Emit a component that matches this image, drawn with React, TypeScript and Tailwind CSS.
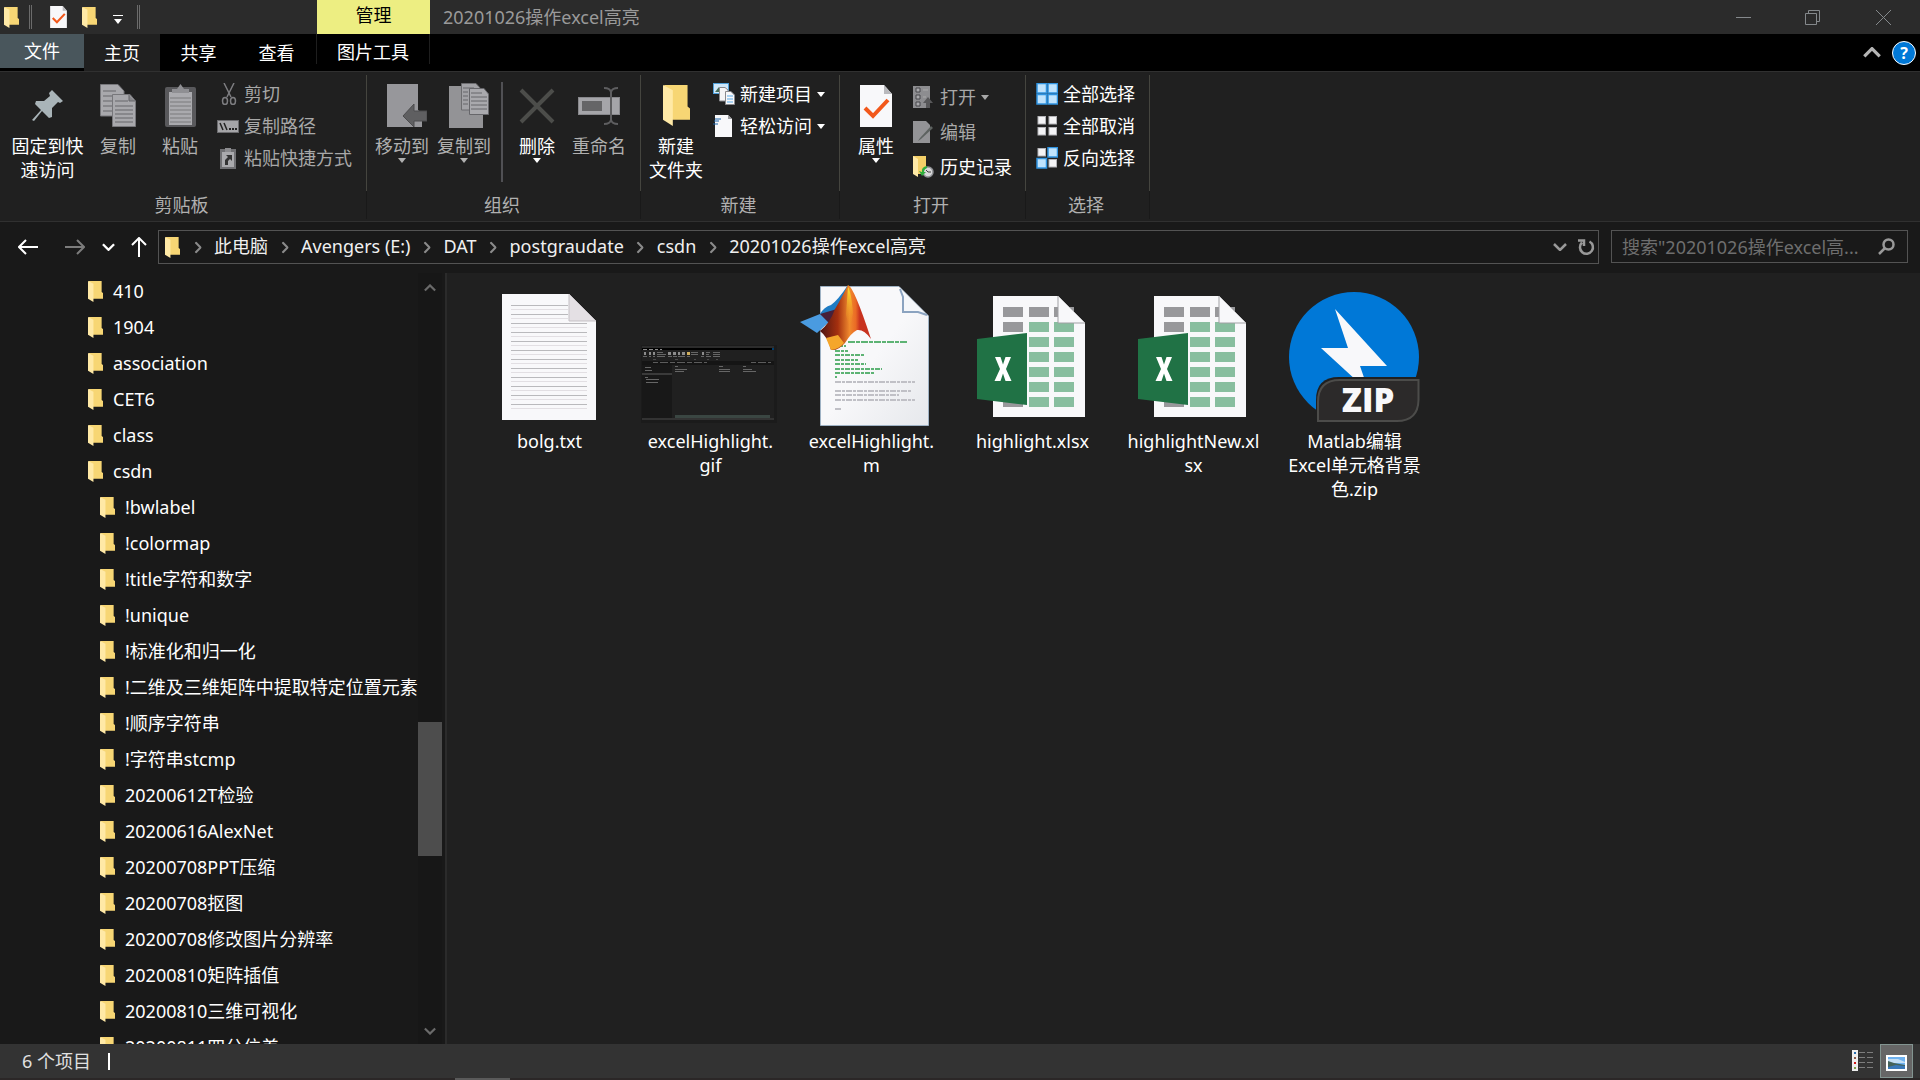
import React from 'react';

type IconProps = { className?: string };

const FolderIcon: React.FC<IconProps> = ({ className = 'w-[15px] h-[21px]' }) => (
  <svg className={`${className} shrink-0`} viewBox="0 0 22 40" preserveAspectRatio="none" aria-hidden="true">
    <path d="M1 0H20V21L22 23V34H1Z" fill="#f7d674" />
    <path d="M0 0L8 5V40L0 34Z" fill="#ffe9a6" />
  </svg>
);

const CheckPage: React.FC<IconProps> = ({ className }) => (
  <svg className={className} viewBox="0 0 32 42" aria-hidden="true">
    <path d="M0 0H24L32 9V42H0Z" fill="#f8f8fa" />
    <path d="M24 0V9H32Z" fill="#b9b9bd" />
    <path d="M5 23L13 31L28 15" fill="none" stroke="#f2581b" strokeWidth="4" />
  </svg>
);

const PinIcon = () => (
  <svg className="w-[31px] h-[31px]" viewBox="0 0 31 31" aria-hidden="true">
    <path d="M20 0L31 11L28 13L26 12L20 18V27L17 28L10 21L2 31L0 30L9 20L3 14L4 11H12L18 6L17 3Z" fill="#a9b4b8" />
  </svg>
);

const CopyIcon = () => (
  <svg className="w-[36px] h-[43px]" viewBox="0 0 36 43" aria-hidden="true">
    <g fill="#a8a8ac" stroke="#77777b">
      <path d="M.5 .5H18L24 7V32H.5Z" />
      <path d="M12.500 10.500H30L35.500 17V42.500H12.500Z" />
    </g>
    <path d="M3 7H16M3 12H12M3 17H12M3 22H12M3 27H12M15 17H28M15 22H33M15 26H33M15 30H33M15 34H33M15 38H33" stroke="#66666a" />
    <path d="M29 11V17H35" fill="#88888c" stroke="#66666a" />
  </svg>
);

const PasteIcon = () => (
  <svg className="w-[31px] h-[43px]" viewBox="0 0 31 43" aria-hidden="true">
    <rect y="3" width="31" height="40" rx="2" fill="#59595c" />
    <rect x="4" y="8" width="23" height="33" fill="#aaaaae" />
    <path d="M7 9V5H12L15.500 0L19 5H24V9Z" fill="#8f8f93" />
    <path d="M5 14H26M5 18H26M5 22H26M5 26H26M5 30H26M5 34H26M5 38H26" stroke="#7a7a7d" />
  </svg>
);

const ScissorsIcon = () => (
  <svg className="w-[20px] h-[22px]" viewBox="-4 0 20 22" fill="none" stroke="#7d7d80" aria-hidden="true">
    <path d="M3 0L10 14M13 0L6 14" strokeWidth="1.500" />
    <ellipse cx="4" cy="18" rx="2.500" ry="3.500" strokeWidth="1.500" />
    <ellipse cx="12" cy="18" rx="2.500" ry="3.500" strokeWidth="1.500" />
  </svg>
);

const PathIcon = () => (
  <svg className="w-[22px] h-[13px]" viewBox="0 0 22 13" aria-hidden="true">
    <rect x=".5" y=".5" width="21" height="12" fill="#a5a5a8" stroke="#6c6c6f" />
    <path d="M3 3L6 10M7 3L10 10" stroke="#222" strokeWidth="1.500" />
    <path d="M12 9H14M15 9H17M18 9H20" stroke="#222" strokeWidth="2" />
  </svg>
);

const ShortcutIcon = () => (
  <svg className="w-[19px] h-[22px]" viewBox="-3 0 19 22" aria-hidden="true">
    <rect y="2" width="16" height="20" fill="#707073" />
    <rect x="2" y="5" width="12" height="15" fill="#aaaaad" />
    <path d="M5 1H11V5H5Z" fill="#8c8c8f" />
    <path d="M5 18V13L8 10L6 8H12V14L10 12L8 14V18Z" fill="#333" />
  </svg>
);

const MoveToIcon = () => (
  <svg className="w-[50px] h-[43px]" viewBox="-10 0 50 43" aria-hidden="true">
    <path d="M0 0H31V26L35 29V43H0Z" fill="#97979b" />
    <path d="M16 32L27 20V27H40V37H27V43Z" fill="#5f5f61" stroke="#4c4c4e" />
  </svg>
);

const CopyToIcon = () => (
  <svg className="w-[50px] h-[45px]" viewBox="-10 0 50 45" aria-hidden="true">
    <path d="M0 3H30V28L34 31V45H0Z" fill="#939396" />
    <path d="M12.500 .5H27L32 6V27H12.500Z" fill="#a2a2a6" stroke="#6d6d70" />
    <path d="M20.500 5.500H35L39.500 11V31.500H20.500Z" fill="#a9a9ad" stroke="#66666a" />
    <path d="M14 5H25M14 9H19M14 13H19M14 17H19M14 21H19M22 10H33M22 14H38M22 18H38M22 22H38M22 26H38" stroke="#66666a" />
  </svg>
);

const DeleteIcon = () => (
  <svg className="w-[36px] h-[36px]" viewBox="0 0 36 36" aria-hidden="true">
    <path d="M2 2L34 34M34 2L2 34" stroke="#4c4d4a" strokeWidth="4" />
  </svg>
);

const RenameIcon = () => (
  <svg className="w-[42px] h-[38px]" viewBox="0 0 42 38" aria-hidden="true">
    <rect x=".5" y="10.500" width="41" height="17" fill="#a5a5a9" stroke="#88888c" />
    <rect x="4" y="14" width="20" height="10" fill="#656567" />
    <path d="M26 1Q32 1 33 5Q34 1 40 1M33 4V34M26 37Q32 37 33 33Q34 37 40 37" fill="none" stroke="#5e5e60" strokeWidth="2" />
  </svg>
);

const NewItemIcon = () => (
  <svg className="w-[22px] h-[22px]" viewBox="0 0 22 22" aria-hidden="true">
    <rect x=".5" y=".5" width="15" height="10" fill="#cfe8fb" stroke="#4f9fd8" />
    <path d="M2 9L6 4L9 9Z" fill="#446d57" />
    <path d="M6.500 4.500H12L15 7V18H6.500Z" fill="#f4f4f6" stroke="#88888c" />
    <path d="M12.500 8.500H18L21.500 12V21.500H12.500Z" fill="#f8f8fa" stroke="#88888c" />
    <path d="M14 13H20M14 16H20M14 19H20" stroke="#58a9e6" />
  </svg>
);

const EasyAccessIcon = () => (
  <svg className="w-[20px] h-[22px]" viewBox="0 0 20 22" aria-hidden="true">
    <path d="M2 0H15L19 4V22H2Z" fill="#f8f8fa" />
    <path d="M15 0V4H19Z" fill="#9c9ca0" />
    <path d="M2 4H8M1 6H6M0 9H5" stroke="#1b62a8" />
  </svg>
);

const OpenIcon = () => (
  <svg className="w-[20px] h-[22px]" viewBox="0 0 20 22" aria-hidden="true">
    <rect width="17" height="22" fill="#8d8d90" />
    <path d="M3 2H7V6H3ZM3 9H7V13H3ZM3 16H7V20H3Z" fill="#a9a9ac" stroke="#47474a" />
    <path d="M10 4H15M10 11H13" stroke="#aaa" />
    <path d="M15 11L20 17H17V22H13V17H10Z" fill="#58585a" />
  </svg>
);

const EditIcon = () => (
  <svg className="w-[20px] h-[22px]" viewBox="0 0 20 22" aria-hidden="true">
    <path d="M0 0H13L17 4V22H0Z" fill="#939396" />
    <path d="M18 5L7 17L5 20L8 18L20 7Z" fill="#5d6260" />
  </svg>
);

const HistoryIcon = () => (
  <svg className="w-[21px] h-[22px]" viewBox="0 0 21 22" aria-hidden="true">
    <path d="M0 0H13V18H0Z" fill="#f3cf68" />
    <path d="M0 0L5 3V21L0 18Z" fill="#ffe9a6" />
    <circle cx="15" cy="16" r="5" fill="#d8d8da" stroke="#909296" strokeWidth="1.500" />
    <path d="M13 14L15 16H18" fill="none" stroke="#444" />
    <path d="M14 10Q8 11 9 16L6 15L9 20L13 16H11Q11 13 14 12Z" fill="#2fae3c" />
  </svg>
);

const TILE_ON = { fill: '#bfe3fd', stroke: '#2f93e0' };
const TILE_OFF = { fill: '#f4f4f6', stroke: '#b4b4b8' };

const TilesIcon: React.FC<{ tiles: boolean[] }> = ({ tiles }) => (
  <svg className="w-[22px] h-[22px]" viewBox="0 0 22 22" aria-hidden="true">
    {tiles.map((on, i) => {
      const size = on ? 10 : 8;
      return (
        <rect
          key={i}
          x={(i % 2 ? 17 : 6) - size / 2}
          y={(i > 1 ? 16.5 : 5.5) - size / 2}
          width={size - 0.5}
          height={size - 0.5}
          strokeWidth={on ? 1.5 : 1}
          {...(on ? TILE_ON : TILE_OFF)}
        />
      );
    })}
  </svg>
);

const Caret: React.FC<IconProps> = ({ className = '' }) => (
  <svg className={`w-[8px] h-[5px] shrink-0 ${className}`} viewBox="0 0 8 5" aria-hidden="true">
    <path d="M0 0H8L4 5Z" fill="currentColor" />
  </svg>
);

const Chevron: React.FC<IconProps> = ({ className = '' }) => (
  <svg className={`shrink-0 ${className}`} viewBox="0 0 14 8" fill="none" stroke="currentColor" strokeWidth="2.500" aria-hidden="true">
    <path d="M1 1L7 7L13 1" />
  </svg>
);

// ---- ribbon ----

interface BigButtonProps {
  icon: React.ReactNode;
  lines: string[];
  width: string;
  muted?: boolean;
  caret?: boolean;
}

const BigButton: React.FC<BigButtonProps> = ({ icon, lines, width, muted, caret }) => (
  <button className={`${width} shrink-0 flex flex-col items-center ${muted ? 'text-[#b0b0b0]' : 'text-white'}`}>
    <span className="h-[55px] flex items-center justify-center">{icon}</span>
    <span className="mt-px leading-6 whitespace-nowrap">
      {lines.map((line) => (
        <span key={line} className="block">{line}</span>
      ))}
    </span>
    {caret && <Caret />}
  </button>
);

interface SmallButtonProps {
  icon: React.ReactNode;
  label: string;
  muted?: boolean;
  caret?: boolean;
}

const SmallButton: React.FC<SmallButtonProps> = ({ icon, label, muted, caret }) => (
  <button className={`flex items-center h-8 whitespace-nowrap ${muted ? 'text-[#a8a8a8]' : 'text-white'}`}>
    <span className="w-[27px] flex shrink-0 justify-start">{icon}</span>
    <span>{label}</span>
    {caret && <Caret className="ml-[5px]" />}
  </button>
);

const RibbonGroup: React.FC<{ title: string; width: string; children: React.ReactNode }> = ({ title, width, children }) => (
  <section className={`${width} shrink-0 flex flex-col pt-[3px]`}>
    <div className="h-[116px] flex items-start border-r border-[#45453f] pt-[3px]">{children}</div>
    <h2 className="h-[28px] flex items-center justify-center border-r border-[#191919] pr-[3px] text-[#b0b0b0]">{title}</h2>
  </section>
);

const Ribbon = () => (
  <div className="h-[151px] shrink-0 flex bg-[#202020] border-y border-[#303030] overflow-hidden">
    <RibbonGroup title="剪贴板" width="w-[367px]">
      <BigButton icon={<PinIcon />} lines={['固定到快', '速访问']} width="w-[95px]" />
      <BigButton icon={<CopyIcon />} lines={['复制']} width="w-[46px]" muted />
      <BigButton icon={<PasteIcon />} lines={['粘贴']} width="w-[78px]" muted />
      <div className="flex flex-col -ml-[2px]">
        <SmallButton icon={<ScissorsIcon />} label="剪切" muted />
        <SmallButton icon={<PathIcon />} label="复制路径" muted />
        <SmallButton icon={<ShortcutIcon />} label="粘贴快捷方式" muted />
      </div>
    </RibbonGroup>
    <RibbonGroup title="组织" width="w-[274px]">
      <span className="w-[4px]" />
      <BigButton icon={<MoveToIcon />} lines={['移动到']} width="w-[62px]" muted caret />
      <BigButton icon={<CopyToIcon />} lines={['复制到']} width="w-[62px]" muted caret />
      <span className="mt-[4px] ml-[6px] h-[100px] w-[2px] bg-[#505054]" />
      <BigButton icon={<DeleteIcon />} lines={['删除']} width="w-[68px]" caret />
      <BigButton icon={<RenameIcon />} lines={['重命名']} width="w-[56px]" muted />
    </RibbonGroup>
    <RibbonGroup title="新建" width="w-[199px]">
      <BigButton icon={<FolderIcon className="w-[27px] h-[41px]" />} lines={['新建', '文件夹']} width="w-[70px]" />
      <div className="flex flex-col pl-[2px]">
        <SmallButton icon={<NewItemIcon />} label="新建项目" caret />
        <SmallButton icon={<EasyAccessIcon />} label="轻松访问" caret />
      </div>
    </RibbonGroup>
    <RibbonGroup title="打开" width="w-[186px]">
      <BigButton icon={<CheckPage className="w-[32px] h-[42px]" />} lines={['属性']} width="w-[72px]" caret />
      <div className="flex flex-col gap-[3px] pt-[3px] pl-px">
        <SmallButton icon={<OpenIcon />} label="打开" muted caret />
        <SmallButton icon={<EditIcon />} label="编辑" muted />
        <SmallButton icon={<HistoryIcon />} label="历史记录" />
      </div>
    </RibbonGroup>
    <RibbonGroup title="选择" width="w-[124px]">
      <div className="flex flex-col pl-[10px]">
        <SmallButton icon={<TilesIcon tiles={[true, true, true, true]} />} label="全部选择" />
        <SmallButton icon={<TilesIcon tiles={[false, false, false, false]} />} label="全部取消" />
        <SmallButton icon={<TilesIcon tiles={[false, true, true, false]} />} label="反向选择" />
      </div>
    </RibbonGroup>
  </div>
);

// ---- title bar and tabs ----

const TitleBar = () => (
  <header className="h-[34px] shrink-0 flex items-stretch bg-[#2b2b2b]">
    <div className="w-[317px] shrink-0 flex items-center pl-1">
      <FolderIcon />
      <span className="ml-[10px] h-[24px] w-[3px] border-x border-[#6b6b6b]" />
      <button aria-label="属性" className="ml-[18px]"><CheckPage className="w-[17px] h-[22px]" /></button>
      <button aria-label="新建文件夹" className="ml-[15px]"><FolderIcon /></button>
      <button aria-label="自定义快速访问工具栏" className="ml-[16px] mt-[4px] flex flex-col items-center gap-[3px] text-white">
        <span className="w-[10px] h-px bg-white" />
        <Caret />
      </button>
      <span className="ml-[14px] h-[24px] w-[3px] border-x border-[#6b6b6b]" />
    </div>
    <button className="w-[113px] shrink-0 bg-[#edee82] text-black pb-[4px]">管理</button>
    <h1 className="flex-1 self-center pl-[13px] text-[#9a9a9a]">20201026操作excel高亮</h1>
    <div className="flex items-center text-[#85898c]">
      <button aria-label="最小化" className="w-[70px] flex justify-center">
        <svg className="w-[15px] h-[15px]" viewBox="0 0 15 15" stroke="currentColor"><path d="M0 7.500H15" /></svg>
      </button>
      <button aria-label="还原" className="w-[68px] flex justify-center">
        <svg className="w-[15px] h-[15px]" viewBox="0 0 15 15" fill="none" stroke="currentColor">
          <path d="M.5 3.500H11.500V14.500H.5ZM3.500 3V.5H14.500V11.500H12" />
        </svg>
      </button>
      <button aria-label="关闭" className="w-[74px] flex justify-center">
        <svg className="w-[15px] h-[15px]" viewBox="0 0 15 15" stroke="currentColor"><path d="M0 0L15 15M15 0L0 15" /></svg>
      </button>
    </div>
  </header>
);

const TabBar = () => (
  <nav className="h-[37px] shrink-0 flex bg-black text-white">
    <button className="w-[84px] h-[34px] bg-[#49565c]">文件</button>
    <button className="w-[76px] bg-[#202020]">主页</button>
    <button className="w-[77px]">共享</button>
    <button className="w-[79px]">查看</button>
    <button className="w-[114px] h-[30px] border-x border-[#1e1e1e] pt-[5px]">图片工具</button>
    <div className="ml-auto flex items-center gap-[11px] pr-1">
      <button aria-label="最小化功能区" className="text-[#b5b5b5]"><Chevron className="w-[18px] h-[11px] rotate-180" /></button>
      <button aria-label="帮助" className="w-6 h-6 rounded-full bg-[#0078d7] border border-white flex items-center justify-center">
        <span className="text-base leading-5 font-bold">?</span>
      </button>
    </div>
  </nav>
);

// ---- address bar ----

const crumbs = ['此电脑', 'Avengers (E:)', 'DAT', 'postgraudate', 'csdn', '20201026操作excel高亮'];

const Arrow: React.FC<IconProps> = ({ className = '' }) => (
  <svg className={`w-[20px] h-[16px] ${className}`} viewBox="0 0 20 16" fill="none" stroke="currentColor" strokeWidth="2" aria-hidden="true">
    <path d="M20 8H2M8 1L1 8L8 15" />
  </svg>
);

const AddressBar = () => (
  <div className="h-[51px] shrink-0 flex items-start bg-[#191919] pt-2 pr-3">
    <div className="w-[158px] shrink-0 h-[34px] flex items-center pl-[18px] text-white">
      <button aria-label="后退"><Arrow /></button>
      <button aria-label="前进" className="ml-[27px] text-[#7c7c7c]"><Arrow className="rotate-180" /></button>
      <button aria-label="最近位置" className="ml-[17px]"><Chevron className="w-[13px] h-[8px]" /></button>
      <button aria-label="上移" className="ml-[14px]"><Arrow className="rotate-90" /></button>
    </div>
    <div className="flex-1 min-w-0 h-[34px] flex items-center border border-[#535353] pl-[6px] text-[#f0f0f0]">
      <FolderIcon />
      <ol className="flex pl-px pb-[2px]">
        {crumbs.map((crumb) => (
          <li key={crumb} className="flex items-center">
            <span className="w-[33px] shrink-0 flex justify-center text-[#8a8a8a] pt-[2px]">
              <Chevron className="w-[12px] h-[7px] -rotate-90" />
            </span>
            <a href="#" className="whitespace-nowrap">{crumb}</a>
          </li>
        ))}
      </ol>
      <button aria-label="以前的位置" className="ml-auto text-[#999]"><Chevron className="w-[14px] h-[8px]" /></button>
      <button aria-label="刷新" className="ml-[11px] mr-[3px] text-[#999]">
        <svg className="w-[17px] h-[17px]" viewBox="0 0 17 17" fill="none" stroke="currentColor" strokeWidth="2.500">
          <path d="M11.500 2.500A6.500 6.500 0 1 1 4 3.500M0 1.500H6V7" />
        </svg>
      </button>
    </div>
    <div className="ml-3 w-[297px] shrink-0 h-[33px] flex items-center border border-[#535353] pl-[10px] pr-3">
      <input
        type="text"
        aria-label="搜索"
        placeholder={'搜索"20201026操作excel高...'}
        className="flex-1 min-w-0 bg-transparent outline-none placeholder:text-[#6e6e6e]"
      />
      <svg className="w-[17px] h-[17px] shrink-0 text-[#999]" viewBox="0 0 17 17" fill="none" stroke="currentColor" strokeWidth="2.500" aria-hidden="true">
        <circle cx="10.500" cy="6.500" r="5" />
        <path d="M7 10L1 16" />
      </svg>
    </div>
  </div>
);

// ---- folder tree ----

const topFolders = ['410', '1904', 'association', 'CET6', 'class', 'csdn'];
const csdnFolders = [
  '!bwlabel',
  '!colormap',
  '!title字符和数字',
  '!unique',
  '!标准化和归一化',
  '!二维及三维矩阵中提取特定位置元素',
  '!顺序字符串',
  '!字符串stcmp',
  '20200612T检验',
  '20200616AlexNet',
  '20200708PPT压缩',
  '20200708抠图',
  '20200708修改图片分辨率',
  '20200810矩阵插值',
  '20200810三维可视化',
  '20200811四分位差',
];

const TreeRow: React.FC<{ name: string; indent: string }> = ({ name, indent }) => (
  <li className={`${indent} h-9 flex items-center gap-[10px] whitespace-nowrap`}>
    <FolderIcon />
    <span>{name}</span>
  </li>
);

const FolderTree = () => (
  <aside className="w-[447px] shrink-0 flex bg-[#191919] border-r-2 border-[#2b2b2b] text-white overflow-hidden">
    <ul className="flex-1 min-w-0 overflow-hidden">
      {topFolders.map((name) => <TreeRow key={name} name={name} indent="pl-[88px]" />)}
      {csdnFolders.map((name) => <TreeRow key={name} name={name} indent="pl-[100px]" />)}
    </ul>
    <div className="w-6 mr-[3px] shrink-0 flex flex-col items-center bg-[#171717] text-[#6a6a6a] pt-[11px] pb-[9px]">
      <Chevron className="w-[12px] h-[8px] rotate-180" />
      <div className="basis-0 grow-[430] shrink-0" />
      <div className="w-full h-[134px] bg-[#4d4d4d]" />
      <div className="basis-0 grow-[171] shrink-0" />
      <Chevron className="w-[12px] h-[8px]" />
    </div>
  </aside>
);

// ---- files ----

const TxtIcon = () => (
  <svg className="w-[94px] h-[126px]" viewBox="0 0 94 126" aria-hidden="true">
    <path d="M0 0H67L94 27V126H0Z" fill="#f8f8fa" />
    {Array.from({ length: 12 }, (_, i) => (
      <g key={i}>
        <path d={`M9 ${11.5 + i * 9}H${i < 2 ? 66 : 85}`} stroke="#b9b9bc" />
        <path d={`M9 ${15.5 + i * 9}H${i < 2 ? 66 : 85}`} stroke="#e2dfe3" />
      </g>
    ))}
    <path d="M67 0V27H94Z" fill="#e4e0e4" stroke="#c5c1c5" />
  </svg>
);

const GifThumb = () => (
  <svg className="w-[136px] h-[78px]" viewBox="0 0 136 78" aria-hidden="true">
    <rect width="136" height="78" fill="#1b1b1b" />
    <rect x="1" y="1" width="132" height="74" fill="#202020" />
    <rect x="1" y="1" width="132" height="2" fill="#2c2c2c" />
    <rect x="1" y="3" width="132" height="2" fill="#000" />
    <rect x="1" y="16" width="132" height="4" fill="#151515" />
    <rect x="1" y="20" width="30" height="53" fill="#181818" />
    <rect x="1" y="28" width="30" height="2" fill="#3a3a3a" />
    <rect x="1" y="73" width="132" height="2" fill="#333" />
    <rect x="34" y="70" width="95" height="3" fill="#3a4642" />
    <path d="M2 4.500H6M8 4.500H12M14 4.500H17M19 4.500H21" stroke="#8a8a8a" />
    <path d="M3 8.500H5M8 8.500H10M12 8.500H14M27 8.500H30M32 8.500H35M37 8.500H39M41 8.500H44M61 8.500H63" stroke="#8c8c8c" strokeWidth="3" />
    <path d="M46 8.500H49" stroke="#cfae5c" strokeWidth="3" />
    <path d="M2 11.500H6M8 11.500H10M12 11.500H14M16 7.500H22M16 9.500H25M16 11.500H24M27 11.500H31M32 11.500H36M37 11.500H44M46 11.500H49M50 7.500H57M50 9.500H57M60 11.500H63M65 7.500H69M65 9.500H68M65 11.500H70M72 7.500H79M72 9.500H79M72 11.500H79" stroke="#666" />
    <path d="M12 14.500H15M34 14.500H37M53 14.500H55M66 14.500H68M75 14.500H77" stroke="#4a4a4a" />
    <path d="M12 17.500H66M110 17.500H130" stroke="#5c5c5c" strokeDasharray="5 2 8 2" />
    <path d="M4 22.500H10M4 25.500H11M4 32.500H7M5 34.500H18M5 37.500H17M34 21.500H37M78 21.500H82M102 21.500H105M34 24.500H46M34 26.500H43M78 24.500H89M78 26.500H89M102 24.500H111M102 26.500H115" stroke="#666" />
    <path d="M131 4H133" stroke="#0078d7" />
  </svg>
);

const MatlabIcon = () => (
  <svg className="w-[131px] h-[142px]" viewBox="0 0 131 142" aria-hidden="true">
    <defs>
      <linearGradient id="membrane" x1="0" x2="1" y1="0" y2="0">
        <stop offset="0" stopColor="#4d1512" />
        <stop offset=".35" stopColor="#a5300f" />
        <stop offset=".58" stopColor="#f08a2e" />
        <stop offset=".7" stopColor="#ea6a25" />
        <stop offset=".78" stopColor="#c8321f" />
        <stop offset="1" stopColor="#c8321f" />
      </linearGradient>
      <linearGradient id="peak" x1="0" x2="0" y1="0" y2="1">
        <stop offset="0" stopColor="#f9e12f" />
        <stop offset="1" stopColor="#f08a22" stopOpacity="0" />
      </linearGradient>
      <linearGradient id="sheet" x1="0" x2="1" y1="0" y2="1">
        <stop offset=".5" stopColor="#f8f8fa" />
        <stop offset="1" stopColor="#e6e8ec" />
      </linearGradient>
    </defs>
    <path d="M20.500 1.500H99L128.500 31V140.500H20.500Z" fill="url(#sheet)" stroke="#9fb2c4" />
    <path d="M99 2L103 10V27H120L128 31Z" fill="#f5f7fa" />
    <path d="M100 4L103 12V27H118L127 30" fill="none" stroke="#8ba3c0" strokeWidth="2" />
    <path d="M48 57H108" stroke="#5db374" strokeWidth="2" strokeDasharray="7 1 4 1" />
    <path d="M38 61H46M35 66H48M35 70H65M35 75H58M35 79H66M35 84H82M35 88H74M35 92H37" stroke="#5db374" strokeWidth="2" strokeDasharray="5 1 3 1" />
    <path d="M35 97H115M35 106H112M35 110H99M35 115H115M35 124H42" stroke="#c0c0c6" strokeWidth="2" strokeDasharray="6 1 3 1" />
    <path d="M0 37L20 29L29 37L17 48Z" fill="#4a9be0" />
    <path d="M20 29Q24 22 31 20Q38 15 48 0L42 20L29 38Z" fill="#1f7cc4" />
    <path d="M20 29L37 24L29 38Z" fill="#47203a" />
    <path d="M20 46Q30 38 35 24Q41 14 48 0Q54 2 71 54Q64 44 57 45Q51 48 45 58Q38 66 31 65Q28 52 20 46Z" fill="url(#membrane)" />
    <path d="M48 2Q51 6 53 28L50 44L46 30Z" fill="url(#peak)" />
    <path d="M31 65L26 53L38 50L44 58Q38 65 31 65Z" fill="#f5a62b" />
  </svg>
);

const ExcelIcon = () => (
  <svg className="w-[108px] h-[122px]" viewBox="0 0 108 122" aria-hidden="true">
    <path d="M16 0H81L108 27V121H16Z" fill="#f8f8fa" />
    {Array.from({ length: 7 }, (_, r) =>
      [26, 52, 77].map((x, c) => (
        <rect key={`${r}-${x}`} x={x} y={11 + r * 15} width="20" height="10" fill={r === 0 || c === 0 ? '#98989b' : '#88be9f'} />
      ))
    )}
    <path d="M81 0L108 27H81Z" fill="#f8f8fa" />
    <path d="M81 0V27H108" fill="none" stroke="#a0a0a4" />
    <path d="M0 43L50 37V109L0 103Z" fill="#207245" />
    <path d="M18 61H23.500L26 68.500L28.500 61H34L29 73L34.500 85H28.500L26 77.500L23.500 85H17.500L23 73Z" fill="#fff" />
  </svg>
);

const ZipIcon = () => (
  <svg className="w-[131px] h-[131px]" viewBox="0 0 131 131" aria-hidden="true">
    <circle cx="65" cy="65" r="65" fill="#0078d7" />
    <path d="M46 17L98 74H71L80 100L32 56H59Z" fill="#f8f8fa" />
    <path d="M27 131V108Q27 85 50 85H131V131Z" fill="#202020" />
    <path d="M29 129V110Q29 88 51 88H129.500V108Q129 129 108 129Z" fill="#2c2a2a" stroke="#4c4c4a" strokeWidth="2" />
    <text x="79" y="120" textAnchor="middle" fontSize="33" fontWeight="800" fill="#f8f8fa" fontFamily="Open Sans, Noto Sans, sans-serif">ZIP</text>
  </svg>
);

const files = [
  { lines: ['bolg.txt'], icon: <TxtIcon />, pad: 'pb-[7px] pr-[2px]' },
  { lines: ['excelHighlight.', 'gif'], icon: <GifThumb />, pad: 'pb-[4px] pr-[4px]' },
  { lines: ['excelHighlight.', 'm'], icon: <MatlabIcon />, pad: 'pr-[13px]' },
  { lines: ['highlight.xlsx'], icon: <ExcelIcon />, pad: 'pb-[9px] pr-[3px]' },
  { lines: ['highlightNew.xl', 'sx'], icon: <ExcelIcon />, pad: 'pb-[9px] pr-[3px]' },
  { lines: ['Matlab编辑', 'Excel单元格背景', '色.zip'], icon: <ZipIcon />, pad: 'pb-[4px]' },
];

const FileGrid = () => (
  <main className="flex-1 min-w-0 bg-[#202020] pl-[22px] pt-[12px] text-white">
    <ul className="flex flex-wrap">
      {files.map((file) => (
        <li key={file.lines.join('')} className="w-[161px] flex flex-col items-center text-center">
          <div className={`h-[142px] flex items-end justify-center ${file.pad}`}>{file.icon}</div>
          <p className="mt-[2px] leading-6 whitespace-nowrap">
            {file.lines.map((line) => (
              <span key={line} className="block">{line}</span>
            ))}
          </p>
        </li>
      ))}
    </ul>
  </main>
);

const StatusBar = () => (
  <footer className="h-[34px] shrink-0 flex items-start bg-[#333] text-[#e0e0e0]">
    <span className="pl-[22px] leading-[34px]">6 个项目</span>
    <span className="ml-[17px] mt-[9px] w-[2px] h-[17px] bg-white" />
    <div className="ml-auto flex items-start pr-[7px]">
      <button aria-label="详细信息" className="mt-[6px] mr-[7px]">
        <svg className="w-[21px] h-[21px]" viewBox="0 0 21 21">
          <path d="M0 0H6V21H0Z" fill="#eee" />
          <path d="M2 2H4V4H2Z" fill="#2a6fb0" />
          <path d="M2 7H4V9H2Z" fill="#8a5a4a" />
          <path d="M2 12H4V14H2Z" fill="#d01818" />
          <path d="M2 17H4V19H2Z" fill="#7fa04a" />
          <path d="M7 2.500H13M15 2.500H21M7 7.500H13M15 7.500H21M7 12.500H13M15 12.500H21M7 17.500H13M15 17.500H21" stroke="#7d7d7d" />
        </svg>
      </button>
      <button aria-label="大图标" className="w-[33px] h-[34px] bg-[#666] border border-[#829490] flex items-center justify-center pt-[4px]">
        <svg className="w-[21px] h-[16px]" viewBox="0 0 21 16">
          <rect width="21" height="16" fill="#fff" />
          <rect x="2" y="2" width="17" height="12" fill="#6fb2f0" />
          <path d="M2 4H12L19 7V8H2Z" fill="#c4dff5" />
          <path d="M2 6L8 8L19 10V12H2Z" fill="#45635a" />
          <path d="M2 12L10 10L19 11V14H2Z" fill="#3a78b8" />
        </svg>
      </button>
    </div>
  </footer>
);

// top edge of the taskbar, with the running app marked
const TaskbarEdge = () => (
  <div className="h-[2px] shrink-0 bg-[#2b2727] pl-[455px]">
    <div className="h-full w-[55px] bg-[#5a5a5a]" />
  </div>
);

export default function App() {
  return (
    <div className="h-screen flex flex-col overflow-hidden bg-[#202020] text-lg leading-6 font-['Noto_Sans','Noto_Sans_CJK_SC',sans-serif]">
      <TitleBar />
      <TabBar />
      <Ribbon />
      <AddressBar />
      <div className="flex-1 min-h-0 flex">
        <FolderTree />
        <FileGrid />
      </div>
      <StatusBar />
      <TaskbarEdge />
    </div>
  );
}
